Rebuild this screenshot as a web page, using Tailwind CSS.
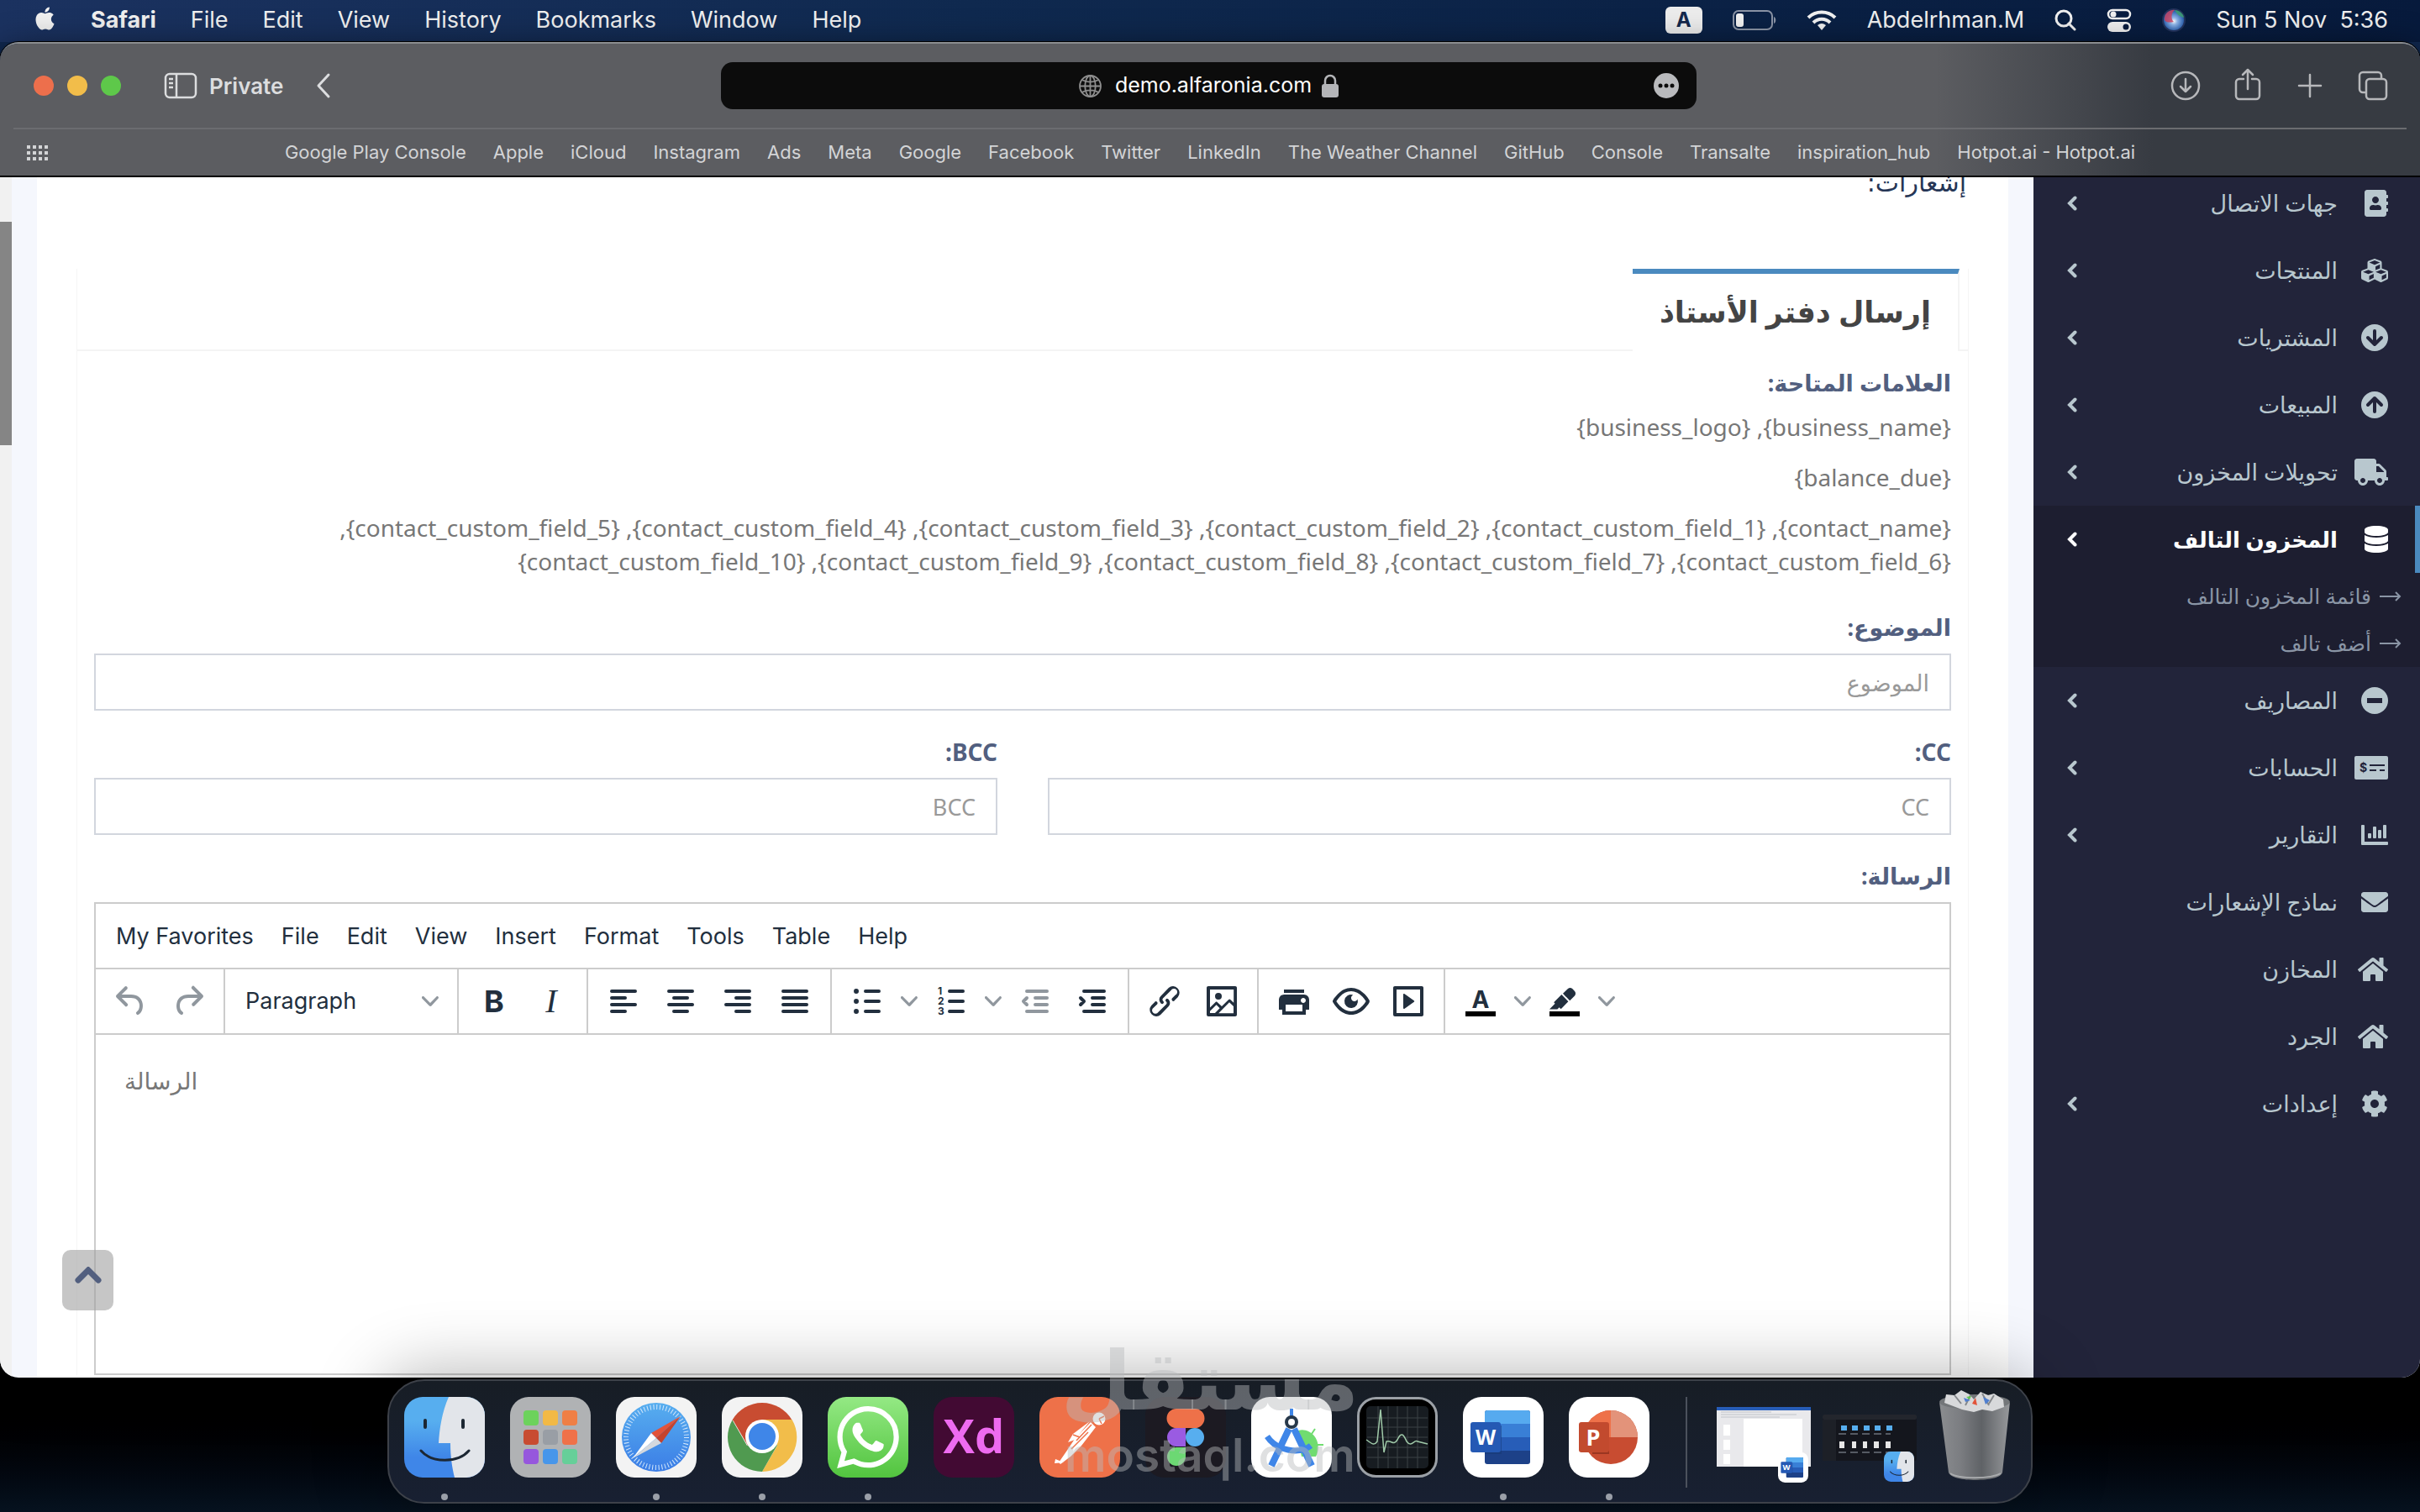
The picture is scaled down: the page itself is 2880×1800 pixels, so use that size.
<!DOCTYPE html>
<html lang="ar">
<head>
    <meta charset="UTF-8">
    <meta name="viewport" content="width=device-width, initial-scale=1.0">
    <title>demo.alfaronia.com</title>
    <script src="https://cdn.jsdelivr.net/npm/@tailwindcss/browser@4"></script>
</head>
<body class="h-screen flex flex-col overflow-hidden bg-linear-to-b from-[#10284f] from-10% via-black via-91% to-[#06121f] font-[Inter,sans-serif]">
    <!-- shared shapes -->
    <svg class="absolute w-0 h-0" aria-hidden="true">
        <symbol id="chev-left" viewBox="0 0 12 18"><path d="M9.500 2.500L3 9l6.500 6.500" fill="none" stroke="currentColor" stroke-width="4" stroke-linecap="round" stroke-linejoin="miter"/></symbol>
        <symbol id="chev-down" viewBox="0 0 10 10"><path fill="currentColor" d="M8.700 2.200c.3-.3.8-.3 1 0 .4.4.4.9 0 1.200L5.700 7.800c-.3.3-.9.3-1.200 0L.2 3.400a.8.8 0 010-1.200c.3-.3.8-.3 1.100 0L5 6l3.700-3.800z"/></symbol>
        <symbol id="home" viewBox="0 0 576 512"><path fill="currentColor" d="M280.370 148.260L96 300.110V464a16 16 0 0 0 16 16l112.060-.29a16 16 0 0 0 15.920-16V368a16 16 0 0 1 16-16h64a16 16 0 0 1 16 16v95.640a16 16 0 0 0 16 16.050L464 480a16 16 0 0 0 16-16V300L295.670 148.260a12.190 12.190 0 0 0-15.300 0zM571.600 251.470L488 182.560V44.050a12 12 0 0 0-12-12h-56a12 12 0 0 0-12 12v72.610L318.470 43a48 48 0 0 0-61 0L4.340 251.470a12 12 0 0 0-1.600 16.900l25.500 31A12 12 0 0 0 45.150 301l235.220-193.740a12.190 12.190 0 0 1 15.300 0L530.900 301a12 12 0 0 0 16.900-1.600l25.500-31a12 12 0 0 0-1.700-16.930z"/></symbol>
        <symbol id="finder" viewBox="0 0 96 96">
            <defs><linearGradient id="gf" x1="0" y1="0" x2="0" y2="1"><stop offset=".3" stop-color="#57aeef"/><stop offset=".75" stop-color="#3f86e8"/></linearGradient>
            <clipPath id="cf"><rect width="96" height="96" rx="22"/></clipPath></defs>
            <g clip-path="url(#cf)"><rect width="96" height="96" fill="url(#gf)"/>
            <path d="M53 0C45 18 42 38 41 55h14c0 16 2 29 5 41h36V0z" fill="#e2e5ea"/>
            <path d="M25 28v8M70 28v8" stroke="#1c2733" stroke-width="4" stroke-linecap="round"/>
            <path d="M20 64c13 15 44 15 57 0" fill="none" stroke="#1c2733" stroke-width="3" stroke-linecap="round"/></g>
        </symbol>
        <symbol id="word" viewBox="0 0 96 96">
            <rect width="96" height="96" rx="22" fill="#fff"/>
            <rect x="26" y="16" width="54" height="64" rx="3" fill="#1d4188"/><path d="M29 16h48a3 3 0 013 3v13H26V19a3 3 0 013-3z" fill="#56aaef"/><path d="M26 32h54v16H26z" fill="#397fd6"/><path d="M26 48h54v16H26z" fill="#275db8"/>
            <path d="M26 34h20v34H26z" fill="#16386f" opacity=".5"/>
            <rect x="9" y="30" width="36" height="36" rx="3" fill="#2559b4"/><text x="27" y="57" text-anchor="middle" font-family="Open Sans" font-weight="700" font-size="25" fill="#fff">W</text>
        </symbol>
    </svg>

    <!-- menu bar -->
    <header class="h-[50px] shrink-0 flex items-center justify-between pl-10 pr-[38px] pb-[2px] text-[27px] text-[#f0f0f0] bg-linear-to-r from-[#1b3260] via-[#0f294f] via-40% to-[#071a3c]">
        <nav class="flex items-center gap-[41px]">
            <svg class="w-[27px] h-8 -mt-1" viewBox="0 0 24 24" fill="currentColor"><path d="M12.152 6.896c-.948 0-2.415-1.078-3.960-1.040-2.040.027-3.910 1.183-4.961 3.014-2.117 3.675-.546 9.103 1.519 12.090 1.013 1.454 2.208 3.090 3.792 3.039 1.520-.065 2.090-.987 3.935-.987 1.831 0 2.350.987 3.960.948 1.637-.026 2.676-1.480 3.676-2.948 1.156-1.688 1.636-3.325 1.662-3.415-.039-.013-3.182-1.221-3.220-4.857-.026-3.040 2.480-4.494 2.597-4.559-1.429-2.090-3.623-2.324-4.390-2.376-2-.156-3.675 1.090-4.610 1.090zM15.530 3.830c.843-1.012 1.400-2.427 1.245-3.830-1.207.052-2.662.805-3.532 1.818-.78.896-1.454 2.338-1.273 3.714 1.338.104 2.715-.688 3.559-1.701"/></svg>
            <a href="#" class="font-bold">Safari</a>
            <a href="#">File</a>
            <a href="#">Edit</a>
            <a href="#">View</a>
            <a href="#">History</a>
            <a href="#">Bookmarks</a>
            <a href="#">Window</a>
            <a href="#">Help</a>
        </nav>
        <div class="flex items-center gap-[36px]">
            <span class="w-11 h-8 rounded-md bg-[#ececec] text-[#14284c] font-bold text-2xl leading-8 text-center">A</span>
            <svg class="w-[52px] h-6" viewBox="0 0 52 24"><rect x="1" y="1" width="46" height="22" rx="6" fill="none" stroke="#8a93a5" stroke-width="2"/><path d="M49 8c3 1 3 7 0 8z" fill="#8a93a5"/><rect x="4" y="4" width="9" height="16" rx="3" fill="#f0f0f0"/></svg>
            <svg class="w-9 h-[26px]" viewBox="0 0 36 26" fill="none" stroke="currentColor" stroke-width="4"><path d="M2 10a23 23 0 0132 0M8 16a14 14 0 0120 0"/><path d="M18 25l-5-6a8 8 0 0110 0z" fill="currentColor" stroke="none"/></svg>
            <span>Abdelrhman.M</span>
            <svg class="w-[26px] h-[26px]" viewBox="0 0 26 26" fill="none" stroke="currentColor" stroke-width="3"><circle cx="11" cy="11" r="9"/><path d="M17 17l7 7" stroke-linecap="round"/></svg>
            <svg class="w-[30px] h-7" viewBox="0 0 30 28"><rect x="2" y="2" width="26" height="10" rx="5" fill="none" stroke="currentColor" stroke-width="2.500"/><circle cx="8" cy="7" r="3.500" fill="currentColor"/><rect x="1" y="16" width="28" height="12" rx="6" fill="currentColor"/><circle cx="23" cy="22" r="3.500" fill="#0a1c3e"/></svg>
            <svg class="w-7 h-7" viewBox="0 0 28 28"><defs><radialGradient id="siri" cx=".5" cy=".55"><stop offset="0" stop-color="#fff"/><stop offset=".35" stop-color="#8fb6ea"/><stop offset="1" stop-color="#2a5fae"/></radialGradient></defs><circle cx="14" cy="14" r="14" fill="#23335c"/><circle cx="14" cy="14" r="12" fill="url(#siri)"/><path d="M3 14C2 4 12 1 15 2c-5 4-4 12-1 14-5 1-9 1-11-2z" fill="#d0405c" opacity=".8"/><path d="M15 2c6 0 11 5 11 9-4-1-8-3-11-9z" fill="#3fa36b" opacity=".8"/></svg>
            <span class="whitespace-pre">Sun 5 Nov  5:36</span>
        </div>
    </header>

    <!-- browser window -->
    <section class="flex-1 min-h-0 flex flex-col rounded-[22px] overflow-hidden border-t-2 border-[#8b8d90] shadow-[0_0_0_1px_#000,0_20px_50px_#000]">
        <div class="shrink-0 bg-linear-to-r from-[#5c5d61] from-80% to-[#373b42] to-89% border-b-2 border-black text-[#dcdddf]">
            <div class="h-[102px] mx-4 border-b-2 border-[#6b6c70] flex items-center justify-between">
                <div class="w-[842px] flex items-center pl-6">
                    <div class="flex gap-4">
                        <span class="size-6 rounded-full bg-[#ed6f4c]"></span>
                        <span class="size-6 rounded-full bg-[#f2bd4a]"></span>
                        <span class="size-6 rounded-full bg-[#5ec84a]"></span>
                    </div>
                    <svg class="w-10 h-8 ml-[51px]" viewBox="0 0 40 32" fill="none" stroke="currentColor" stroke-width="2.500"><rect x="2" y="2" width="36" height="28" rx="5"/><path d="M15 2v28M6 8h5M6 13h5M6 18h5"/></svg>
                    <span class="ml-[14px] text-[26px] font-semibold">Private</span>
                    <svg class="w-5 h-8 ml-[38px]" viewBox="0 0 20 32" fill="none" stroke="currentColor" stroke-width="3" stroke-linecap="round" stroke-linejoin="round"><path d="M16 3L4 16l12 13"/></svg>
                </div>
                <div class="flex-1 h-14 rounded-[14px] bg-[#0c0c0c] flex items-center justify-between px-5 text-white">
                    <span class="w-8"></span>
                    <div class="flex items-center gap-3">
                        <svg class="w-[27px] h-[27px] mr-1 text-[#8e8e8e]" viewBox="0 0 26 26" fill="none" stroke="currentColor" stroke-width="1.800"><circle cx="13" cy="13" r="12"/><ellipse cx="13" cy="13" rx="6" ry="12"/><path d="M13 1v24M1 13h24M4 6c5 3 13 3 18 0M4 20c5-3 13-3 18 0"/></svg>
                        <span class="text-[25px]">demo.alfaronia.com</span>
                        <svg class="w-5 h-7 text-[#b4b5b8]" viewBox="0 0 20 28"><path d="M4 13V8a6 6 0 0112 0v5" fill="none" stroke="currentColor" stroke-width="2.500"/><rect y="12" width="20" height="16" rx="3" fill="currentColor"/></svg>
                    </div>
                    <svg class="size-8" viewBox="0 0 32 32"><circle cx="16" cy="16" r="15" fill="#b9babd"/><g fill="#0c0c0c"><circle cx="9" cy="16" r="2.500"/><circle cx="16" cy="16" r="2.500"/><circle cx="23" cy="16" r="2.500"/></g></svg>
                </div>
                <div class="w-[845px] flex items-center justify-end gap-[39px] pr-[22px] text-[#b7b8bb]">
                    <svg class="size-9" viewBox="0 0 36 36" fill="none" stroke="currentColor" stroke-width="2.500" stroke-linecap="round" stroke-linejoin="round"><circle cx="18" cy="18" r="16"/><path d="M18 10v15M12 19l6 6 6-6"/></svg>
                    <svg class="w-[34px] h-10 -mt-1" viewBox="0 0 34 40" fill="none" stroke="currentColor" stroke-width="2.500" stroke-linecap="round" stroke-linejoin="round"><path d="M12 14H7a4 4 0 00-4 4v16a4 4 0 004 4h20a4 4 0 004-4V18a4 4 0 00-4-4h-5M17 26V3M11 9l6-6 6 6"/></svg>
                    <svg class="size-9" viewBox="0 0 36 36" fill="none" stroke="currentColor" stroke-width="2.500" stroke-linecap="round"><path d="M18 5v26M5 18h26"/></svg>
                    <svg class="size-9" viewBox="0 0 36 36" fill="none" stroke="currentColor" stroke-width="2.500"><rect x="10" y="10" width="24" height="24" rx="4"/><path d="M10 26H6a4 4 0 01-4-4V6a4 4 0 014-4h18a4 4 0 014 4v4"/></svg>
                </div>
            </div>
            <nav class="h-[55px] px-8 flex items-center text-[22px] text-[#d3d4d6]">
                <svg class="w-[26px] h-5" viewBox="0 0 26 20" fill="currentColor"><path d="M0 1h4v4H0zM7 1h4v4H7zM14 1h4v4h-4zM21 1h4v4h-4zM0 8h4v4H0zM7 8h4v4H7zM14 8h4v4h-4zM21 8h4v4h-4zM0 15h4v4H0zM7 15h4v4H7zM14 15h4v4h-4zM21 15h4v4h-4z"/></svg>
                <div class="flex-1 flex justify-center gap-8 pr-[26px]">
                    <a href="#">Google Play Console</a>
                    <a href="#">Apple</a>
                    <a href="#">iCloud</a>
                    <a href="#">Instagram</a>
                    <a href="#">Ads</a>
                    <a href="#">Meta</a>
                    <a href="#">Google</a>
                    <a href="#">Facebook</a>
                    <a href="#">Twitter</a>
                    <a href="#">LinkedIn</a>
                    <a href="#">The Weather Channel</a>
                    <a href="#">GitHub</a>
                    <a href="#">Console</a>
                    <a href="#">Transalte</a>
                    <a href="#">inspiration_hub</a>
                    <a href="#">Hotpot.ai - Hotpot.ai</a>
                </div>
            </nav>
        </div>

        <!-- page -->
        <div class="relative flex-1 min-h-0 overflow-hidden flex bg-[#f5f7fd] font-['Noto_Sans','DejaVu_Sans',sans-serif]">
            <div class="w-[14px] bg-[#f1f1f1] pt-[53px]"><div class="h-[266px] bg-[#858585]"></div></div>
            <main dir="rtl" class="flex-1 min-w-0 ml-[30px] mr-[30px] px-[47px] bg-white overflow-hidden">
                <h1 class="h-[30px] pr-[3px] text-[30px] leading-[14px] font-['DejaVu_Sans',sans-serif] text-[#263656]">إشعارات:</h1>
                <div class="mt-[79px] border-x border-[#f5f5f5]">
                    <div class="flex border-b-2 border-[#f4f4f4] pr-[10px]">
                        <h2 class="-mb-[2px] h-[98px] px-8 border-t-6 border-t-[#4a8abf] border-r-2 border-r-[#f4f4f4] bg-white text-[35px] leading-[90px] font-bold text-[#444]">إرسال دفتر الأستاذ</h2>
                    </div>
                    <form class="px-5 text-[28px] leading-10 text-[#777]">
                        <p class="mt-[18px] text-[27px] font-bold text-[#525f7f]">العلامات المتاحة:</p>
                        <p class="mt-[12px]">{business_name}, {business_logo}</p>
                        <p class="mt-5">{balance_due}</p>
                        <p class="mt-5">{contact_name}, {contact_custom_field_1}, {contact_custom_field_2}, {contact_custom_field_3}, {contact_custom_field_4}, {contact_custom_field_5}, {contact_custom_field_6}, {contact_custom_field_7}, {contact_custom_field_8}, {contact_custom_field_9}, {contact_custom_field_10}</p>
                        <label for="subject" class="block mt-[39px] text-[27px] font-bold text-[#525f7f]">الموضوع:</label>
                        <input id="subject" placeholder="الموضوع" class="block mt-[11px] w-full h-[68px] border-2 border-[#d2d6de] px-6 text-[27px] placeholder:text-[#999]">
                        <div class="grid grid-cols-2 gap-15 mt-[29px]">
                            <div>
                                <label for="cc" class="block text-[28px] font-bold text-[#525f7f]">CC:</label>
                                <input id="cc" placeholder="CC" class="block mt-[11px] w-full h-[68px] border-2 border-[#d2d6de] px-6 text-[27px] placeholder:text-[#999]">
                            </div>
                            <div>
                                <label for="bcc" class="block text-[28px] font-bold text-[#525f7f]">BCC:</label>
                                <input id="bcc" placeholder="BCC" class="block mt-[11px] w-full h-[68px] border-2 border-[#d2d6de] px-6 text-[27px] placeholder:text-[#999]">
                            </div>
                        </div>
                        <label for="message" class="block mt-[29px] text-[27px] font-bold text-[#525f7f]">الرسالة:</label>

                        <!-- rich text editor -->
                        <div dir="ltr" class="mt-[11px] border-2 border-[#ccc] text-[#222f3e] font-[Inter,sans-serif]">
                            <div class="h-[76px] flex items-center gap-[33px] px-6 pt-[2px] text-[27px]">
                                <button type="button">My Favorites</button>
                                <button type="button">File</button>
                                <button type="button">Edit</button>
                                <button type="button">View</button>
                                <button type="button">Insert</button>
                                <button type="button">Format</button>
                                <button type="button">Tools</button>
                                <button type="button">Table</button>
                                <button type="button">Help</button>
                            </div>
                            <div class="h-20 flex border-y-2 border-[#ccc]">
                                <div class="flex px-2 border-r-2 border-[#ccc] text-[#222f3e]/50">
                                    <button type="button" aria-label="Undo" class="w-[68px] grid place-items-center"><svg class="size-12" viewBox="0 0 24 24" fill="currentColor"><path d="M6.400 8H12c3.700 0 6.200 2 6.800 5.100.6 2.700-.4 5.600-2.300 6.800a1 1 0 01-1-1.800c1.100-.6 1.800-2.700 1.400-4.600-.5-2.100-2.100-3.500-4.900-3.500H6.400l3.300 3.300a1 1 0 11-1.400 1.400l-5-5a1 1 0 010-1.400l5-5a1 1 0 011.400 1.400L6.400 8z"/></svg></button>
                                    <button type="button" aria-label="Redo" class="w-[68px] grid place-items-center"><svg class="size-12" viewBox="0 0 24 24" fill="currentColor"><path d="M17.600 10H12c-2.800 0-4.400 1.400-4.900 3.500-.4 2 .3 4 1.400 4.600a1 1 0 11-1 1.800c-2-1.200-2.900-4.100-2.300-6.800.6-3 3-5.100 6.800-5.100h5.600l-3.300-3.300a1 1 0 111.400-1.400l5 5a1 1 0 010 1.400l-5 5a1 1 0 01-1.400-1.400l3.300-3.300z"/></svg></button>
                                </div>
                                <div class="relative flex items-center px-2 border-r-2 border-[#ccc]">
                                    <select aria-label="Block format" class="appearance-none w-[260px] h-[68px] px-4 text-[27px]"><option>Paragraph</option></select>
                                    <svg class="absolute right-[22px] size-5 text-[#222f3e]/50 pointer-events-none"><use href="#chev-down"/></svg>
                                </div>
                                <div class="flex px-2 border-r-2 border-[#ccc]">
                                    <button type="button" class="w-[68px] text-[36px] font-bold">B</button>
                                    <button type="button" class="w-[68px] text-[40px] italic font-['Liberation_Serif',serif]">I</button>
                                </div>
                                <div class="flex px-2 border-r-2 border-[#ccc]">
                                    <button type="button" aria-label="Align left" class="w-[68px] grid place-items-center"><svg class="size-12" viewBox="0 0 24 24" stroke="currentColor" stroke-width="2" stroke-linecap="round"><path d="M5 6h14M5 10h8M5 14h14M5 18h8"/></svg></button>
                                    <button type="button" aria-label="Align center" class="w-[68px] grid place-items-center"><svg class="size-12" viewBox="0 0 24 24" stroke="currentColor" stroke-width="2" stroke-linecap="round"><path d="M5 6h14M8 10h8M5 14h14M8 18h8"/></svg></button>
                                    <button type="button" aria-label="Align right" class="w-[68px] grid place-items-center"><svg class="size-12" viewBox="0 0 24 24" stroke="currentColor" stroke-width="2" stroke-linecap="round"><path d="M5 6h14M11 10h8M5 14h14M11 18h8"/></svg></button>
                                    <button type="button" aria-label="Justify" class="w-[68px] grid place-items-center"><svg class="size-12" viewBox="0 0 24 24" stroke="currentColor" stroke-width="2" stroke-linecap="round"><path d="M5 6h14M5 10h14M5 14h14M5 18h14"/></svg></button>
                                </div>
                                <div class="flex px-2 border-r-2 border-[#ccc]">
                                    <button type="button" aria-label="Bullet list" class="w-[68px] grid place-items-center"><svg class="size-12" viewBox="0 0 24 24" stroke="currentColor" stroke-width="2" stroke-linecap="round"><path d="M11 6h8M11 12h8M11 18h8"/><path d="M5.500 6h0M5.500 12h0M5.500 18h0" stroke-width="3"/></svg></button>
                                    <button type="button" aria-label="Bullet list styles" class="w-8 grid place-items-center text-[#222f3e]/50"><svg class="size-5"><use href="#chev-down"/></svg></button>
                                    <button type="button" aria-label="Numbered list" class="w-[68px] grid place-items-center"><svg class="size-12" viewBox="0 0 24 24" fill="currentColor"><path d="M11 6h8M11 12h8M11 18h8" stroke="currentColor" stroke-width="2" stroke-linecap="round"/><g font-size="6" font-weight="700" font-family="Inter"><text x="4" y="8">1</text><text x="4" y="14">2</text><text x="4" y="20">3</text></g></svg></button>
                                    <button type="button" aria-label="Numbered list styles" class="w-8 grid place-items-center text-[#222f3e]/50"><svg class="size-5"><use href="#chev-down"/></svg></button>
                                    <button type="button" aria-label="Decrease indent" class="w-[68px] grid place-items-center text-[#222f3e]/50"><svg class="size-12" viewBox="0 0 24 24" fill="none" stroke="currentColor" stroke-width="2" stroke-linecap="round" stroke-linejoin="round"><path d="M7 6h12M12 10h7M12 14h7M7 18h12M7 10l-2 2 2 2"/></svg></button>
                                    <button type="button" aria-label="Increase indent" class="w-[68px] grid place-items-center"><svg class="size-12" viewBox="0 0 24 24" fill="none" stroke="currentColor" stroke-width="2" stroke-linecap="round" stroke-linejoin="round"><path d="M7 6h12M12 10h7M12 14h7M7 18h12M5 10l2 2-2 2"/></svg></button>
                                </div>
                                <div class="flex px-2 border-r-2 border-[#ccc]">
                                    <button type="button" aria-label="Link" class="w-[68px] grid place-items-center"><svg class="size-12" viewBox="0 0 24 24" fill="currentColor"><path d="M6.200 12.300a1 1 0 011.400 1.400l-2.100 2a2 2 0 102.700 2.800l4.800-4.800a1 1 0 000-1.400 1 1 0 111.400-1.300 2.900 2.900 0 010 4L9.600 20a3.900 3.900 0 01-5.500-5.500l2-2zm11.600-.6a1 1 0 01-1.400-1.400l2-2a2 2 0 10-2.600-2.800L11 10.300a1 1 0 000 1.400A1 1 0 119.600 13a2.900 2.900 0 010-4L14.400 4a3.900 3.900 0 015.500 5.500l-2 2z"/></svg></button>
                                    <button type="button" aria-label="Image" class="w-[68px] grid place-items-center"><svg class="size-12" viewBox="0 0 24 24" fill="currentColor" fill-rule="evenodd"><path d="M5 15.700l3.300-3.200c.3-.3.7-.3 1 0L12 15l4.100-4c.3-.4.8-.4 1 0l2 1.900V5H5v10.700zM5 18V19h3l2.800-2.900-2-2L5 17.900zm14-3l-2.500-2.400-6.400 6.500H19v-4zM4 3h16c.6 0 1 .4 1 1v16c0 .6-.4 1-1 1H4a1 1 0 01-1-1V4c0-.6.4-1 1-1zm6 8a2 2 0 100-4 2 2 0 000 4z"/></svg></button>
                                </div>
                                <div class="flex px-2 border-r-2 border-[#ccc]">
                                    <button type="button" aria-label="Print" class="w-[68px] grid place-items-center"><svg class="size-12" viewBox="0 0 24 24" fill="currentColor"><path d="M18 8H6a3 3 0 00-3 3v6h2v3h14v-3h2v-6a3 3 0 00-3-3zm-1 10H7v-4h10v4zm.5-5c-.8 0-1.500-.7-1.500-1.500s.7-1.500 1.500-1.500 1.500.7 1.500 1.500-.7 1.500-1.500 1.500zm.5-8H6v2h12V5z"/></svg></button>
                                    <button type="button" aria-label="Preview" class="w-[68px] grid place-items-center"><svg class="size-12" viewBox="0 0 24 24" fill="currentColor"><path d="M3.500 12.500c.5.8 1.100 1.600 1.800 2.300 2 2 4.200 3.200 6.700 3.200s4.700-1.200 6.700-3.200a16.200 16.200 0 002.100-2.800 15.700 15.700 0 00-2.100-2.800c-2-2-4.200-3.200-6.700-3.200a9.300 9.300 0 00-6.700 3.200A16.200 16.200 0 003.200 12c0 .2.2.3.3.5zm-2.400-1l.7-1.200L4 7.800C6.200 5.400 8.900 4 12 4c3 0 5.800 1.400 8.100 3.800a18.200 18.200 0 012.800 3.700v1l-.7 1.200-2.100 2.500c-2.300 2.400-5 3.800-8.100 3.800-3 0-5.800-1.400-8.100-3.800a18.200 18.200 0 01-2.800-3.700 1 1 0 010-1zm12-3.300a2 2 0 102.700 2.600 4 4 0 11-2.600-2.600z"/></svg></button>
                                    <button type="button" aria-label="Media" class="w-[68px] grid place-items-center"><svg class="size-12" viewBox="0 0 24 24" fill="currentColor" fill-rule="evenodd"><path d="M4 3h16c.6 0 1 .4 1 1v16c0 .6-.4 1-1 1H4a1 1 0 01-1-1V4c0-.6.4-1 1-1zm1 2v14h14V5H5zm4.800 2.600l5.600 4a.5.5 0 010 .8l-5.600 4A.5.5 0 019 16V8a.5.5 0 01.8-.4z"/></svg></button>
                                </div>
                                <div class="flex px-2">
                                    <button type="button" aria-label="Text color" class="w-[68px] grid place-items-center"><svg class="size-12" viewBox="0 0 24 24" fill="currentColor"><path fill="#000" d="M3 18h18v3H3z"/><text x="12" y="16" text-anchor="middle" font-size="14" font-weight="700" font-family="Inter">A</text></svg></button>
                                    <button type="button" aria-label="Text colors" class="w-8 grid place-items-center text-[#222f3e]/50"><svg class="size-5"><use href="#chev-down"/></svg></button>
                                    <button type="button" aria-label="Highlight" class="w-[68px] grid place-items-center"><svg class="size-12" viewBox="0 0 24 24" fill="currentColor"><path fill="#000" d="M3 18h18v3H3z"/><path d="M7.700 16.700H3l3.300-3.300-.7-.8L10.200 8l4 4.100-4 4.200c-.2.2-.6.2-.8 0l-.6-.7-1.100 1.100zm5-7.500L11 7.400l3-2.900a2 2 0 012.600 0L18 6c.7.7.7 2 0 2.700l-2.900 2.900-1.800-1.800-.5-.6"/></svg></button>
                                    <button type="button" aria-label="Highlight colors" class="w-8 grid place-items-center text-[#222f3e]/50"><svg class="size-5"><use href="#chev-down"/></svg></button>
                                </div>
                            </div>
                            <textarea id="message" placeholder="الرسالة" class="block w-full h-[403px] px-[34px] py-9 resize-none text-[28px] font-['DejaVu_Sans',sans-serif] placeholder:text-[#777]"></textarea>
                        </div>
                    </form>
                </div>
            </main>

            <!-- sidebar -->
            <aside dir="rtl" class="w-[460px] shrink-0 -mt-[9px] bg-[#22243a] text-[27px] text-[#b8c7ce]">
                <a href="#" class="h-20 flex items-center pr-[38px] pl-10">
                    <svg class="w-7 h-8" viewBox="0 0 448 512" fill="currentColor"><path d="M436 160c6.600 0 12-5.400 12-12v-40c0-6.600-5.400-12-12-12h-20V48c0-26.500-21.500-48-48-48H48C21.500 0 0 21.500 0 48v416c0 26.500 21.500 48 48 48h320c26.500 0 48-21.500 48-48v-48h20c6.600 0 12-5.400 12-12v-40c0-6.600-5.400-12-12-12h-20v-64h20c6.600 0 12-5.400 12-12v-40c0-6.600-5.400-12-12-12h-20v-64h20zm-228-32c35.300 0 64 28.700 64 64s-28.700 64-64 64-64-28.700-64-64 28.700-64 64-64zm112 236.800c0 10.600-10 19.200-22.400 19.200H118.400C106 384 96 375.400 96 364.800v-19.200c0-31.800 30.100-57.600 67.200-57.600h5c12.300 5.100 25.700 8 39.800 8s27.600-2.900 39.800-8h5c37.100 0 67.200 25.800 67.200 57.600v19.200z"/></svg>
                    <span class="mr-8 flex-1">جهات الاتصال</span>
                    <svg class="w-3 h-[18px]"><use href="#chev-left"/></svg>
                </a>
                <a href="#" class="h-20 flex items-center pr-[38px] pl-10">
                    <svg class="w-8 h-8" viewBox="0 0 512 512" fill="currentColor"><path d="M488.600 250.200L392 214V105.500c0-15-9.300-28.400-23.400-33.700l-100-37.500c-8.100-3.100-17.100-3.100-25.300 0l-100 37.500c-14.100 5.300-23.400 18.700-23.400 33.700V214l-96.600 36.200C9.300 255.500 0 268.900 0 283.900V394c0 13.600 7.700 26.100 19.900 32.200l100 50c10.100 5.100 22.100 5.100 32.200 0l103.900-52 103.900 52c10.100 5.100 22.100 5.100 32.200 0l100-50c12.200-6.100 19.900-18.600 19.900-32.200V283.900c0-15-9.300-28.400-23.400-33.700zM358 214.800l-85 31.900v-68.200l85-37v73.300zM154 104.100l102-38.200 102 38.200v.6l-102 41.400-102-41.400v-.6zm84 291.100l-85 42.500v-79.100l85-38.800v75.400zm0-112l-102 41.400-102-41.400v-.6l102-38.200 102 38.200v.6zm240 112l-85 42.500v-79.100l85-38.800v75.400zm0-112l-102 41.400-102-41.400v-.6l102-38.200 102 38.200v.6z"/></svg>
                    <span class="mr-7 flex-1">المنتجات</span>
                    <svg class="w-3 h-[18px]"><use href="#chev-left"/></svg>
                </a>
                <a href="#" class="h-20 flex items-center pr-[38px] pl-10">
                    <svg class="w-8 h-8" viewBox="0 0 32 32"><circle cx="16" cy="16" r="16" fill="currentColor"/><path d="M16 8v16M8 16l8 8 8-8" fill="none" stroke="#22243a" stroke-width="4" stroke-linecap="round" stroke-linejoin="round"/></svg>
                    <span class="mr-7 flex-1">المشتريات</span>
                    <svg class="w-3 h-[18px]"><use href="#chev-left"/></svg>
                </a>
                <a href="#" class="h-20 flex items-center pr-[38px] pl-10">
                    <svg class="w-8 h-8" viewBox="0 0 32 32"><circle cx="16" cy="16" r="16" fill="currentColor"/><path d="M16 24V8M8 16l8-8 8 8" fill="none" stroke="#22243a" stroke-width="4" stroke-linecap="round" stroke-linejoin="round"/></svg>
                    <span class="mr-7 flex-1">المبيعات</span>
                    <svg class="w-3 h-[18px]"><use href="#chev-left"/></svg>
                </a>
                <a href="#" class="h-20 flex items-center pr-[38px] pl-10">
                    <svg class="w-10 h-8" viewBox="0 0 640 512" fill="currentColor"><path d="M624 352h-16V243.900c0-12.700-5.100-24.900-14.100-33.900L494 110.100c-9-9-21.200-14.100-33.900-14.100H416V48c0-26.500-21.500-48-48-48H48C21.500 0 0 21.500 0 48v320c0 26.500 21.500 48 48 48h16c0 53 43 96 96 96s96-43 96-96h128c0 53 43 96 96 96s96-43 96-96h48c8.800 0 16-7.200 16-16v-32c0-8.800-7.200-16-16-16zM160 464c-26.500 0-48-21.500-48-48s21.500-48 48-48 48 21.500 48 48-21.500 48-48 48zm320 0c-26.500 0-48-21.500-48-48s21.500-48 48-48 48 21.500 48 48-21.500 48-48 48zm80-208H416V144h44.100l99.900 99.900V256z"/></svg>
                    <span class="mr-5 flex-1">تحويلات المخزون</span>
                    <svg class="w-3 h-[18px]"><use href="#chev-left"/></svg>
                </a>
                <div class="bg-[#1d1e30]">
                    <a href="#" class="h-20 flex items-center pr-8 pl-10 border-r-6 border-[#4a8abf] text-white text-[26px] font-bold">
                        <svg class="w-7 h-8" viewBox="0 0 448 512" fill="currentColor"><path d="M448 73.143v45.714C448 159.143 347.667 192 224 192S0 159.143 0 118.857V73.143C0 32.857 100.333 0 224 0s224 32.857 224 73.143zM448 176v102.857C448 319.143 347.667 352 224 352S0 319.143 0 278.857V176c48.125 33.143 136.208 48.572 224 48.572S399.874 209.143 448 176zm0 160v102.857C448 479.143 347.667 512 224 512S0 479.143 0 438.857V336c48.125 33.143 136.208 48.572 224 48.572S399.874 369.143 448 336z"/></svg>
                        <span class="mr-8 flex-1">المخزون التالف</span>
                        <svg class="w-3 h-[18px]"><use href="#chev-left"/></svg>
                    </a>
                    <div class="text-[25px] text-[#8a95a5]">
                        <a href="#" class="h-14 flex items-center gap-[10px] pr-[22px]">
                            <svg class="w-[26px] h-3" viewBox="0 0 26 12" fill="none" stroke="currentColor" stroke-width="2"><path d="M0 6h24M19 1l5 5-5 5"/></svg>
                            <span>قائمة المخزون التالف</span>
                        </a>
                        <a href="#" class="h-14 flex items-center gap-[10px] pr-[22px]">
                            <svg class="w-[26px] h-3" viewBox="0 0 26 12" fill="none" stroke="currentColor" stroke-width="2"><path d="M0 6h24M19 1l5 5-5 5"/></svg>
                            <span>أضف تالف</span>
                        </a>
                    </div>
                </div>
                <a href="#" class="h-20 flex items-center pr-[38px] pl-10">
                    <svg class="w-8 h-8" viewBox="0 0 32 32"><circle cx="16" cy="16" r="16" fill="currentColor"/><path d="M7 13h18v6H7z" fill="#22243a"/></svg>
                    <span class="mr-7 flex-1">المصاريف</span>
                    <svg class="w-3 h-[18px]"><use href="#chev-left"/></svg>
                </a>
                <a href="#" class="h-20 flex items-center pr-[38px] pl-10">
                    <svg class="w-10 h-7" viewBox="0 0 40 28"><rect width="40" height="28" rx="2" fill="currentColor"/><path d="M18 11h18M18 17h8M30 17h6" stroke="#22243a" stroke-width="2"/><text x="6" y="19" font-size="14" font-weight="700" font-family="Inter" fill="#22243a" direction="ltr">$</text></svg>
                    <span class="mr-5 flex-1">الحسابات</span>
                    <svg class="w-3 h-[18px]"><use href="#chev-left"/></svg>
                </a>
                <a href="#" class="h-20 flex items-center pr-[38px] pl-10">
                    <svg class="w-8 h-6" viewBox="0 0 32 24" fill="currentColor"><path d="M0 1a1 1 0 011-1h2a1 1 0 011 1v19h27a1 1 0 011 1v2a1 1 0 01-1 1H1a1 1 0 01-1-1z"/><rect x="8" y="10" width="4" height="6" rx="1"/><rect x="14" y="2" width="4" height="14" rx="1"/><rect x="20" y="6" width="4" height="10" rx="1"/><rect x="26" width="4" height="16" rx="1"/></svg>
                    <span class="mr-7 flex-1">التقارير</span>
                    <svg class="w-3 h-[18px]"><use href="#chev-left"/></svg>
                </a>
                <a href="#" class="h-20 flex items-center pr-[38px] pl-10">
                    <svg class="w-8 h-8" viewBox="0 0 512 512" fill="currentColor"><path d="M502.300 190.800c3.900-3.100 9.700-.2 9.700 4.700V400c0 26.500-21.500 48-48 48H48c-26.500 0-48-21.500-48-48V195.600c0-5 5.700-7.800 9.700-4.700 22.400 17.400 52.100 39.500 154.100 113.600 21.100 15.400 56.700 47.800 92.200 47.600 35.700.3 72-32.800 92.300-47.600 102-74.100 131.600-96.300 154-113.700zM256 320c23.200.4 56.600-29.200 73.400-41.400 132.700-96.300 142.800-104.700 173.400-128.700 5.800-4.500 9.200-11.500 9.200-18.900v-19c0-26.500-21.500-48-48-48H48c-26.500 0-48 21.500-48 48v19c0 7.400 3.400 14.300 9.200 18.900 30.600 23.900 40.700 32.400 173.400 128.700 16.800 12.200 50.200 41.800 73.400 41.400z"/></svg>
                    <span class="mr-7 flex-1">نماذج الإشعارات</span>
                </a>
                <a href="#" class="h-20 flex items-center pr-[38px] pl-10">
                    <svg class="w-9 h-8"><use href="#home"/></svg>
                    <span class="mr-6 flex-1">المخازن</span>
                </a>
                <a href="#" class="h-20 flex items-center pr-[38px] pl-10">
                    <svg class="w-9 h-8"><use href="#home"/></svg>
                    <span class="mr-6 flex-1">الجرد</span>
                </a>
                <a href="#" class="h-20 flex items-center pr-[38px] pl-10">
                    <svg class="w-8 h-8" viewBox="0 0 512 512" fill="currentColor"><path d="M487.400 315.700l-42.600-24.600c4.300-23.200 4.300-47 0-70.200l42.600-24.600c4.900-2.800 7.100-8.600 5.500-14-11.100-35.600-30-67.800-54.700-94.600-3.800-4.100-10-5.100-14.800-2.300L380.800 110c-17.900-15.400-38.500-27.300-60.800-35.100V25.800c0-5.600-3.900-10.500-9.400-11.700-36.700-8.200-74.300-7.800-109.200 0-5.500 1.200-9.400 6.100-9.400 11.700V75c-22.200 7.900-42.800 19.800-60.800 35.100L88.700 85.500c-4.900-2.800-11-1.900-14.800 2.300-24.700 26.700-43.600 58.900-54.700 94.600-1.700 5.400.6 11.200 5.500 14L67.300 221c-4.300 23.200-4.300 47 0 70.200l-42.600 24.600c-4.900 2.800-7.100 8.600-5.500 14 11.100 35.600 30 67.800 54.700 94.600 3.800 4.100 10 5.100 14.800 2.300l42.600-24.600c17.900 15.400 38.500 27.300 60.800 35.100v49.200c0 5.600 3.900 10.500 9.400 11.700 36.700 8.200 74.300 7.800 109.200 0 5.500-1.200 9.400-6.100 9.400-11.700v-49.200c22.200-7.900 42.800-19.800 60.800-35.100l42.600 24.600c4.900 2.800 11 1.900 14.800-2.300 24.700-26.700 43.600-58.900 54.700-94.600 1.500-5.500-.7-11.300-5.600-14.100zM256 336c-44.100 0-80-35.900-80-80s35.900-80 80-80 80 35.900 80 80-35.900 80-80 80z"/></svg>
                    <span class="mr-7 flex-1">إعدادات</span>
                    <svg class="w-3 h-[18px]"><use href="#chev-left"/></svg>
                </a>
            </aside>

            <button aria-label="Back to top" class="absolute left-[74px] bottom-20 w-[61px] h-[72px] rounded-[10px] bg-[#a0a0a0]/60">
                <svg class="w-8 h-5 mx-auto -mt-3" viewBox="0 0 32 20" fill="none" stroke="#525f7f" stroke-width="7" stroke-linecap="round"><path d="M4 16L16 4l12 12"/></svg>
            </button>
        </div>
    </section>

    <!-- dock -->
    <footer class="relative z-10 h-40 shrink-0 pt-[2px] flex justify-center items-start">
        <div class="h-[148px] flex pt-[19px] pl-[18px] pr-6 rounded-[44px] bg-linear-to-b from-[#171d25] to-[#182032] border-2 border-[#3d4149] shadow-[0_0_80px_10px_rgba(0,0,0,0.28)]">
            <div class="flex gap-[30px]">
                <div class="flex flex-col items-center gap-[19px]">
                    <svg class="size-24"><use href="#finder"/></svg>
                    <span class="size-2 rounded-full bg-[#9a9fa8]"></span>
                </div>
                <svg class="size-24" viewBox="0 0 96 96"><rect width="96" height="96" rx="22" fill="#b0b2b4"/><rect x="16" y="16" width="18" height="18" rx="4" fill="#6cd25c"/><rect x="39" y="16" width="18" height="18" rx="4" fill="#f2b945"/><rect x="62" y="16" width="18" height="18" rx="4" fill="#ef7f45"/><rect x="16" y="39" width="18" height="18" rx="4" fill="#c84c31"/><rect x="39" y="39" width="18" height="18" rx="4" fill="#999ea5"/><rect x="62" y="39" width="18" height="18" rx="4" fill="#ef7149"/><rect x="16" y="62" width="18" height="18" rx="4" fill="#9657dd"/><rect x="39" y="62" width="18" height="18" rx="4" fill="#4796ea"/><rect x="62" y="62" width="18" height="18" rx="4" fill="#66cf99"/></svg>
                <div class="flex flex-col items-center gap-[19px]">
                    <svg class="size-24" viewBox="0 0 96 96"><defs><linearGradient id="gs" x1="0" y1="0" x2="0" y2="1"><stop offset="0" stop-color="#57aeef"/><stop offset="1" stop-color="#3b7de6"/></linearGradient></defs><rect width="96" height="96" rx="22" fill="#f3f3f3"/><circle cx="48" cy="48" r="41" fill="url(#gs)"/><circle cx="48" cy="48" r="36" fill="none" stroke="#d4e8fb" stroke-width="6" stroke-dasharray="1 2.770"/><path d="M77 23L42 43l6 6z" fill="#e2533a"/><path d="M77 23L54 55l-6-6z" fill="#c4432e"/><path d="M20 73l22-30 6 6z" fill="#fff"/><path d="M20 73l34-18-6-6z" fill="#d5d9de"/></svg>
                    <span class="size-2 rounded-full bg-[#9a9fa8]"></span>
                </div>
                <div class="flex flex-col items-center gap-[19px]">
                    <svg class="size-24" viewBox="0 0 96 96"><rect width="96" height="96" rx="22" fill="#f3f3f3"/><path d="M48 48L12.500 27.500A41 41 0 0183.500 27.500z" fill="#c84c31"/><path d="M48 27h35.500A41 41 0 0148 89l18-31z" fill="#f2bd4a"/><path d="M12.500 27.500A41 41 0 0048 89l18-31.500L48 48l-18 10z" fill="#509a50"/><path d="M13 27l18 31 17-31z" fill="#c84c31"/><circle cx="48" cy="47" r="20" fill="#fff"/><circle cx="48" cy="47" r="16" fill="#3f86e8"/></svg>
                    <span class="size-2 rounded-full bg-[#9a9fa8]"></span>
                </div>
                <div class="flex flex-col items-center gap-[19px]">
                    <svg class="size-24" viewBox="0 0 96 96"><defs><linearGradient id="gw" x1="0" y1="0" x2="0" y2="1"><stop offset="0" stop-color="#94e984"/><stop offset="1" stop-color="#52c43f"/></linearGradient></defs><rect width="96" height="96" rx="22" fill="url(#gw)"/><g transform="translate(11 11) scale(3.080)" fill="#fff"><path d="M17.472 14.382c-.297-.149-1.758-.867-2.030-.967-.273-.099-.471-.148-.67.15-.197.297-.767.966-.94 1.164-.173.199-.347.223-.644.075-.297-.15-1.255-.463-2.390-1.475-.883-.788-1.480-1.761-1.653-2.059-.173-.297-.018-.458.13-.606.134-.133.298-.347.446-.52.149-.174.198-.298.298-.497.099-.198.05-.371-.025-.52-.075-.149-.669-1.612-.916-2.207-.242-.579-.487-.5-.669-.51-.173-.008-.371-.01-.57-.01-.198 0-.52.074-.792.372-.272.297-1.040 1.016-1.040 2.479 0 1.462 1.065 2.875 1.213 3.074.149.198 2.096 3.200 5.077 4.487.709.306 1.262.489 1.694.625.712.227 1.360.195 1.871.118.571-.085 1.758-.719 2.006-1.413.248-.694.248-1.289.173-1.413-.074-.124-.272-.198-.57-.347m-5.421 7.403h-.004a9.870 9.870 0 01-5.031-1.378l-.361-.214-3.741.982.998-3.648-.235-.374a9.860 9.860 0 01-1.510-5.260c.001-5.450 4.436-9.884 9.888-9.884 2.640 0 5.122 1.030 6.988 2.898a9.825 9.825 0 012.893 6.994c-.003 5.450-4.437 9.884-9.885 9.884m8.413-18.297A11.815 11.815 0 0012.050 0C5.495 0 .16 5.335.157 11.892c0 2.096.547 4.142 1.588 5.945L.057 24l6.305-1.654a11.882 11.882 0 005.683 1.448h.005c6.554 0 11.890-5.335 11.893-11.893a11.821 11.821 0 00-3.480-8.413z"/></g></svg>
                    <span class="size-2 rounded-full bg-[#9a9fa8]"></span>
                </div>
                <svg class="size-24" viewBox="0 0 96 96"><rect width="96" height="96" rx="22" fill="#420a33"/><text x="48" y="67" text-anchor="middle" font-family="Open Sans" font-weight="700" font-size="56" fill="#ee6bf0">Xd</text></svg>
                <svg class="size-24" viewBox="0 0 96 96"><rect width="96" height="96" rx="22" fill="#ee7149"/><circle cx="71" cy="26" r="7.500" fill="#fff"/><path d="M71 26l6-3M71 26l3 6" stroke="#ee7149" stroke-width="1.500"/><path d="M61 30l6 6-17 22-13 13-12 9-2-2 9-13 10-15z" fill="#fff"/><path d="M60 29L40 44l-6 10 8-3z" fill="#fff"/><path d="M62 33L44 52M58 42L38 62M40 45l8 3" fill="none" stroke="#ee7149" stroke-width="1.500"/><path d="M19 74l10 4-11 1z" fill="#fff"/></svg>
                <svg class="size-24" viewBox="0 0 96 96"><rect width="96" height="96" rx="22" fill="#1c1a22"/><path d="M48 14H37a11.500 11.500 0 000 23h11zM48 14h11a11.500 11.500 0 010 23H48z" fill="#ee7149"/><path d="M48 37H37a11 11 0 000 22h11z" fill="#9a5be2"/><circle cx="59" cy="48" r="11" fill="#57aeef"/><path d="M48 60H37a11 11 0 1011 11z" fill="#6cd873"/></svg>
                <svg class="size-24" viewBox="0 0 96 96"><rect width="96" height="96" rx="22" fill="#fff"/><path d="M53 41a19 21 0 0124 30H60z" fill="#70dc70"/><path d="M72 44l4-6M78 57h8" stroke="#70dc70" stroke-width="2"/><g fill="none" stroke="#3f86e8" stroke-linecap="butt"><path d="M45 38L24 82M51 38l21 44" stroke-width="8"/><path d="M19 47c11 17 38 22 52 11" stroke-width="7"/></g><path d="M46 14h4v10h-4z" fill="#3f86e8"/><circle cx="48" cy="30" r="6" fill="#fff" stroke="#27384a" stroke-width="4"/></svg>
                <svg class="size-24" viewBox="0 0 96 96"><rect x="1.500" y="1.500" width="93" height="93" rx="21" fill="#000" stroke="#9ba0a6" stroke-width="3"/><rect x="11" y="11" width="74" height="74" rx="5" fill="#171c21"/><path d="M12 25h72M12 36h72M12 48h72M12 60h72M12 72h72M25 11v74M37 11v74M48 11v74M60 11v74M72 11v74" stroke="#3c4247"/><path d="M11 51c6 4 9 8 13 2l4-38 4 51 3-13c6-2 8 6 13-2 5-11 8-5 11 2 6 8 9-3 13 0l12 3" fill="none" stroke="#9fc9a8" stroke-width="1.500"/></svg>
                <div class="flex flex-col items-center gap-[19px]">
                    <svg class="size-24"><use href="#word"/></svg>
                    <span class="size-2 rounded-full bg-[#9a9fa8]"></span>
                </div>
                <div class="flex flex-col items-center gap-[19px]">
                    <svg class="size-24" viewBox="0 0 96 96"><rect width="96" height="96" rx="22" fill="#fff"/><circle cx="50" cy="48" r="32" fill="#c84c31"/><path d="M50 16a32 32 0 0132 32H50z" fill="#e3937a"/><path d="M18 48a32 32 0 0132-32v32z" fill="#ee7149"/><path d="M28 34h20v34H28z" fill="#6d1f12" opacity=".5"/><rect x="12" y="30" width="36" height="36" rx="3" fill="#c24a2e"/><text x="29" y="58" text-anchor="middle" font-family="Open Sans" font-weight="700" font-size="27" fill="#fff">P</text></svg>
                    <span class="size-2 rounded-full bg-[#9a9fa8]"></span>
                </div>
            </div>
            <div class="w-[2px] h-[108px] ml-[43px] mr-[35px] bg-[#4b515c]"></div>
            <div class="flex gap-[14px]">
                <svg class="w-28 h-[104px]" viewBox="0 0 112 104"><rect y="12" width="112" height="71" fill="#e9e9ec"/><path d="M0 12h112v4H0z" fill="#275db8"/><path d="M5 18h60M5 21h90M5 24h70" stroke="#c0c3c9"/><path d="M32 26h70v57H32zM8 33h8v13H8zM8 51h8v12H8zM8 68h8v12H8z" fill="#fff"/><svg x="73" y="66" width="36" height="36"><use href="#word"/></svg></svg>
                <svg class="w-28 h-[104px]" viewBox="0 0 112 104"><rect y="21" width="112" height="55" rx="3" fill="#14161d"/><rect y="21" width="112" height="6" rx="2" fill="#23262d"/><rect y="27" width="16" height="49" fill="#1d2027"/><g fill="#57aeef"><path d="M22 34h7v6h-7zM35 34h7v6h-7zM49 34h7v6h-7zM62 34h7v6h-7zM76 34h7v6h-7z"/></g><g fill="#e6e6e6"><path d="M20 53h6v8h-6zM35 53h5v8h-5zM48 53h5v8h-5zM61 53h6v8h-6zM75 53h6v8h-6z"/></g><path d="M19 44h62M19 66h62" stroke="#555a63" stroke-width="2" stroke-dasharray="9 5"/><svg x="73" y="65" width="36" height="36"><use href="#finder"/></svg></svg>
            </div>
            <svg class="w-[86px] h-[112px] ml-[26px] -mt-[10px]" viewBox="0 0 86 112"><defs><linearGradient id="gt"><stop offset="0" stop-color="#8b8d90"/><stop offset=".3" stop-color="#7b7d81"/><stop offset=".6" stop-color="#5f6266"/><stop offset="1" stop-color="#97999c"/></linearGradient></defs><path d="M1 16c0 8 84 8 84 0l-9 84c-3 12-60 12-64 0z" fill="url(#gt)"/><ellipse cx="43" cy="16" rx="42" ry="9" fill="#737679"/><path d="M7 17L9 7l10 1 8-6 10 5 5 6 8-9 9 4 7-2 11 7 1 9-14 5-12-2-10 3-14-3z" fill="#d8d9db"/><path d="M19 8l8 10M38 8l-6 12M52 6l8 14M66 8l-6 10" stroke="#85888c" stroke-width="2"/><path d="M30 11l8 3-6 2zM53 10l8 4-5 5z" fill="#4f7fd0"/><path d="M40 18l4-7 2 9z" fill="#e2533a"/><path d="M33 10l6-1-2 4z" fill="#5ec84a"/><path d="M14 101c10 7 48 7 60 0" fill="none" stroke="#aaacae" stroke-width="2"/></svg>
        </div>
        <div class="absolute inset-x-0 -top-[52px] flex flex-col items-center font-bold text-[#b9babd]/45 pointer-events-none">
            <span class="text-[97px] leading-[114px] font-['DejaVu_Sans',sans-serif]">مستقل</span>
            <span class="text-[55px] leading-[60px] font-semibold">mostaql.com</span>
        </div>
    </footer>
</body>
</html>
